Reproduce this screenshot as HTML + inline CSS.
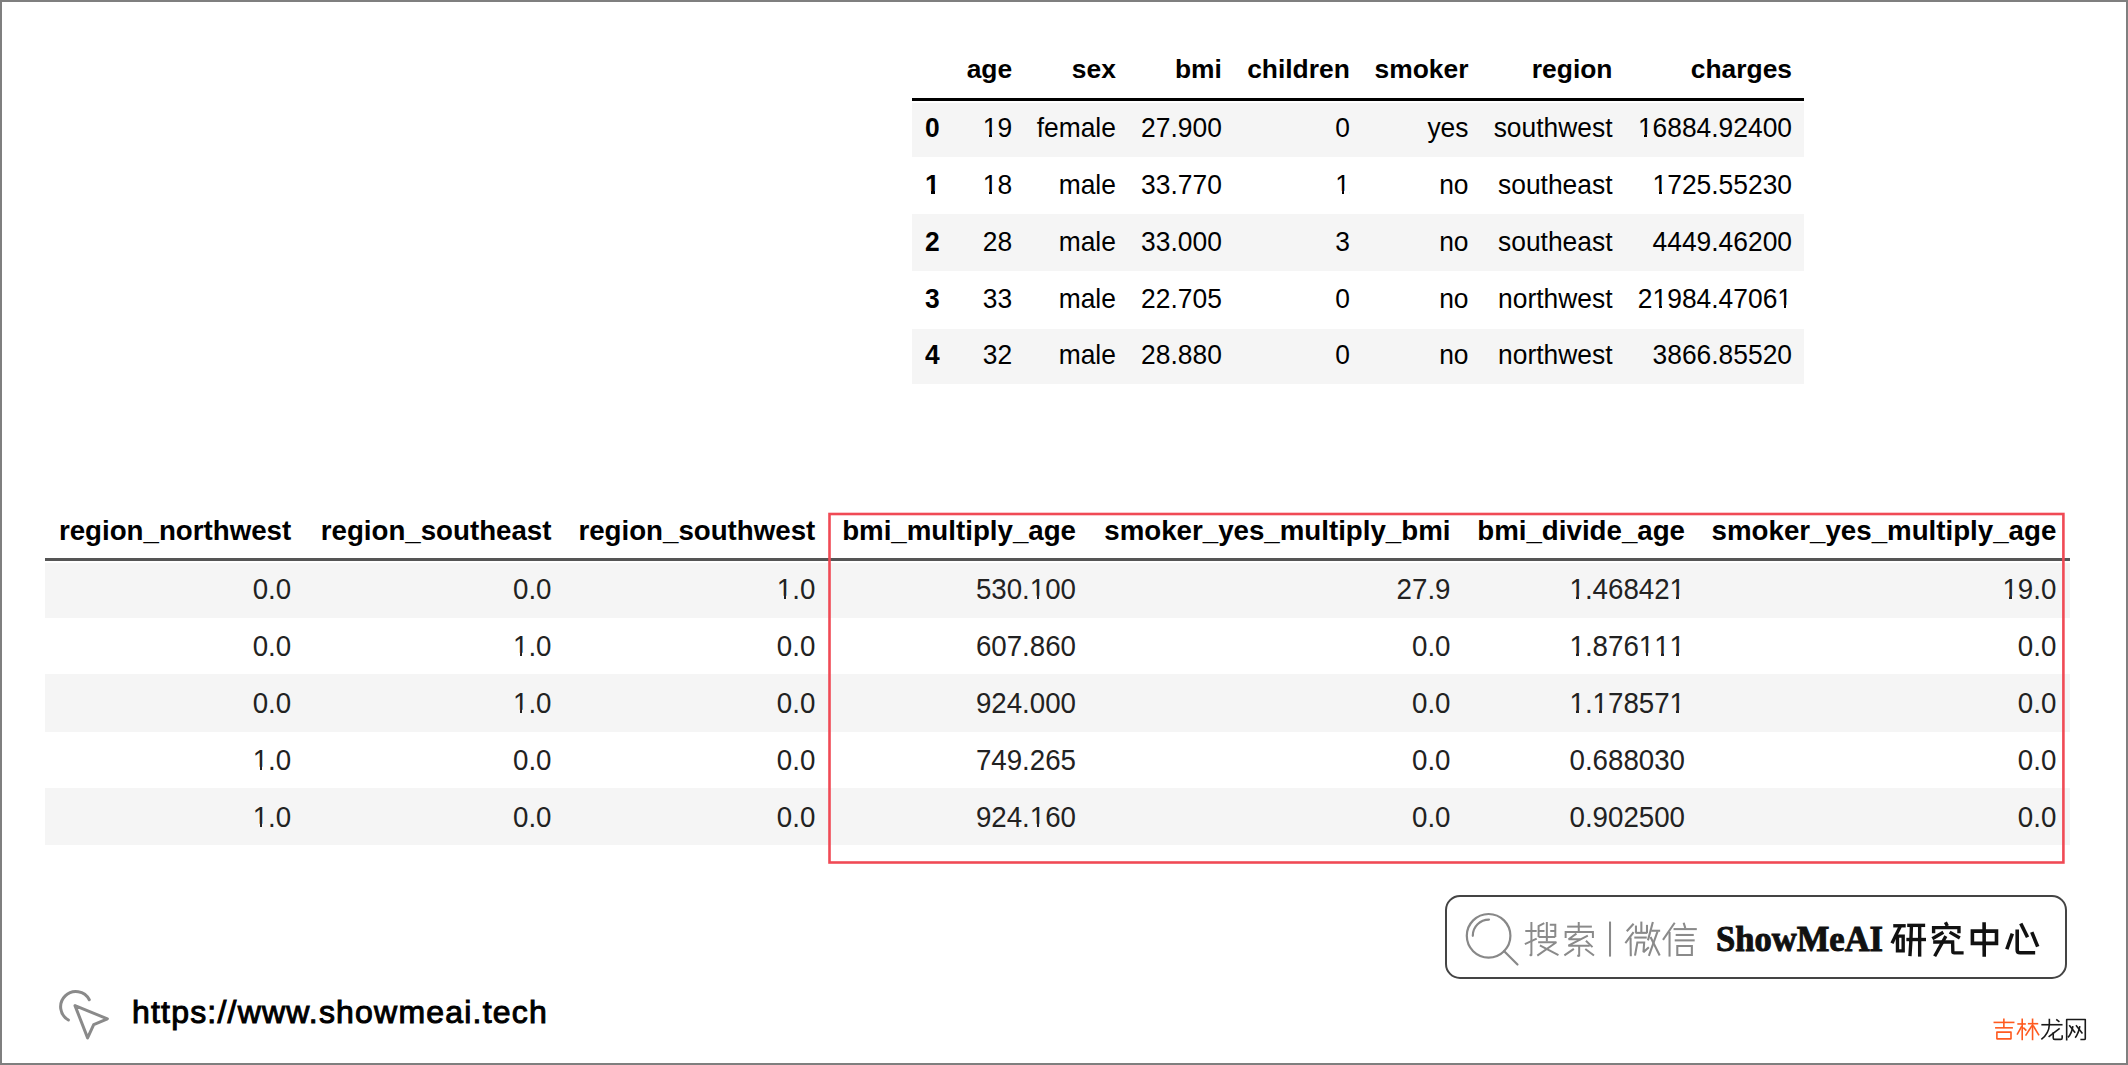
<!DOCTYPE html>
<html><head><meta charset="utf-8"><style>
html,body{margin:0;padding:0;}
body{width:2128px;height:1065px;position:relative;overflow:hidden;background:#fff;font-family:"Liberation Sans", sans-serif;}
.frame{position:absolute;left:0;top:0;width:2124px;height:1061px;border:2px solid #7f7f7f;}
.r{position:absolute;box-sizing:content-box;}
.t{position:absolute;line-height:0;white-space:nowrap;}
.a1,.b1{position:relative;}
.a1::before,.a1::after,.b1::before,.b1::after{content:'';position:absolute;background:var(--bg);}
.a1::before{left:0.03em;width:0.219em;bottom:0.175em;height:0.15em;}
.a1::after{left:0.342em;width:0.2em;bottom:0.175em;height:0.15em;}
.b1::before{left:0.03em;width:0.2em;bottom:0.175em;height:0.175em;}
.b1::after{left:0.374em;width:0.18em;bottom:0.175em;height:0.175em;}
</style></head><body>
<div class="frame"></div>
<div class="r" style="left:911.5px;top:98px;width:892.5px;height:3px;background:#000"></div>
<div class="r" style="left:911.5px;top:103px;width:892.5px;height:53.50px;background:#f5f5f5"></div>
<div class="r" style="left:911.5px;top:213.8px;width:892.5px;height:57.20px;background:#f5f5f5"></div>
<div class="r" style="left:911.5px;top:328.5px;width:892.5px;height:55.50px;background:#f5f5f5"></div>
<div class="t" style="top:69.45px;font-size:26.4px;right:1115.90px;text-align:right;font-weight:bold;">age</div>
<div class="t" style="top:69.45px;font-size:26.4px;right:1012.10px;text-align:right;font-weight:bold;">sex</div>
<div class="t" style="top:69.45px;font-size:26.4px;right:906.20px;text-align:right;font-weight:bold;">bmi</div>
<div class="t" style="top:69.45px;font-size:26.4px;right:778.20px;text-align:right;font-weight:bold;">children</div>
<div class="t" style="top:69.45px;font-size:26.4px;right:659.50px;text-align:right;font-weight:bold;">smoker</div>
<div class="t" style="top:69.45px;font-size:26.4px;right:515.50px;text-align:right;font-weight:bold;">region</div>
<div class="t" style="top:69.45px;font-size:26.4px;right:336.00px;text-align:right;font-weight:bold;">charges</div>
<div class="t" style="top:128.25px;font-size:26.4px;--bg:#f5f5f5;transform:scale(1,1.05);transform-origin:0 9.15px;left:925.00px;font-weight:bold;">0</div>
<div class="t" style="top:128.25px;font-size:26.4px;--bg:#f5f5f5;transform:scale(1,1.05);transform-origin:100% 9.15px;right:1115.90px;text-align:right;"><span class="a1">1</span>9</div>
<div class="t" style="top:128.25px;font-size:26.4px;--bg:#f5f5f5;transform:scale(1,1.05);transform-origin:100% 9.15px;right:1012.10px;text-align:right;">female</div>
<div class="t" style="top:128.25px;font-size:26.4px;--bg:#f5f5f5;transform:scale(1,1.05);transform-origin:100% 9.15px;right:906.20px;text-align:right;">27.900</div>
<div class="t" style="top:128.25px;font-size:26.4px;--bg:#f5f5f5;transform:scale(1,1.05);transform-origin:100% 9.15px;right:778.20px;text-align:right;">0</div>
<div class="t" style="top:128.25px;font-size:26.4px;--bg:#f5f5f5;transform:scale(1,1.05);transform-origin:100% 9.15px;right:659.50px;text-align:right;">yes</div>
<div class="t" style="top:128.25px;font-size:26.4px;--bg:#f5f5f5;transform:scale(1,1.05);transform-origin:100% 9.15px;right:515.50px;text-align:right;">southwest</div>
<div class="t" style="top:128.25px;font-size:26.4px;--bg:#f5f5f5;transform:scale(1,1.05);transform-origin:100% 9.15px;right:336.00px;text-align:right;"><span class="a1">1</span>6884.92400</div>
<div class="t" style="top:185.05px;font-size:26.4px;--bg:#fff;transform:scale(1,1.05);transform-origin:0 9.15px;left:925.00px;font-weight:bold;"><span class="b1">1</span></div>
<div class="t" style="top:185.05px;font-size:26.4px;--bg:#fff;transform:scale(1,1.05);transform-origin:100% 9.15px;right:1115.90px;text-align:right;"><span class="a1">1</span>8</div>
<div class="t" style="top:185.05px;font-size:26.4px;--bg:#fff;transform:scale(1,1.05);transform-origin:100% 9.15px;right:1012.10px;text-align:right;">male</div>
<div class="t" style="top:185.05px;font-size:26.4px;--bg:#fff;transform:scale(1,1.05);transform-origin:100% 9.15px;right:906.20px;text-align:right;">33.770</div>
<div class="t" style="top:185.05px;font-size:26.4px;--bg:#fff;transform:scale(1,1.05);transform-origin:100% 9.15px;right:778.20px;text-align:right;"><span class="a1">1</span></div>
<div class="t" style="top:185.05px;font-size:26.4px;--bg:#fff;transform:scale(1,1.05);transform-origin:100% 9.15px;right:659.50px;text-align:right;">no</div>
<div class="t" style="top:185.05px;font-size:26.4px;--bg:#fff;transform:scale(1,1.05);transform-origin:100% 9.15px;right:515.50px;text-align:right;">southeast</div>
<div class="t" style="top:185.05px;font-size:26.4px;--bg:#fff;transform:scale(1,1.05);transform-origin:100% 9.15px;right:336.00px;text-align:right;"><span class="a1">1</span>725.55230</div>
<div class="t" style="top:241.85px;font-size:26.4px;--bg:#f5f5f5;transform:scale(1,1.05);transform-origin:0 9.15px;left:925.00px;font-weight:bold;">2</div>
<div class="t" style="top:241.85px;font-size:26.4px;--bg:#f5f5f5;transform:scale(1,1.05);transform-origin:100% 9.15px;right:1115.90px;text-align:right;">28</div>
<div class="t" style="top:241.85px;font-size:26.4px;--bg:#f5f5f5;transform:scale(1,1.05);transform-origin:100% 9.15px;right:1012.10px;text-align:right;">male</div>
<div class="t" style="top:241.85px;font-size:26.4px;--bg:#f5f5f5;transform:scale(1,1.05);transform-origin:100% 9.15px;right:906.20px;text-align:right;">33.000</div>
<div class="t" style="top:241.85px;font-size:26.4px;--bg:#f5f5f5;transform:scale(1,1.05);transform-origin:100% 9.15px;right:778.20px;text-align:right;">3</div>
<div class="t" style="top:241.85px;font-size:26.4px;--bg:#f5f5f5;transform:scale(1,1.05);transform-origin:100% 9.15px;right:659.50px;text-align:right;">no</div>
<div class="t" style="top:241.85px;font-size:26.4px;--bg:#f5f5f5;transform:scale(1,1.05);transform-origin:100% 9.15px;right:515.50px;text-align:right;">southeast</div>
<div class="t" style="top:241.85px;font-size:26.4px;--bg:#f5f5f5;transform:scale(1,1.05);transform-origin:100% 9.15px;right:336.00px;text-align:right;">4449.46200</div>
<div class="t" style="top:298.65px;font-size:26.4px;--bg:#fff;transform:scale(1,1.05);transform-origin:0 9.15px;left:925.00px;font-weight:bold;">3</div>
<div class="t" style="top:298.65px;font-size:26.4px;--bg:#fff;transform:scale(1,1.05);transform-origin:100% 9.15px;right:1115.90px;text-align:right;">33</div>
<div class="t" style="top:298.65px;font-size:26.4px;--bg:#fff;transform:scale(1,1.05);transform-origin:100% 9.15px;right:1012.10px;text-align:right;">male</div>
<div class="t" style="top:298.65px;font-size:26.4px;--bg:#fff;transform:scale(1,1.05);transform-origin:100% 9.15px;right:906.20px;text-align:right;">22.705</div>
<div class="t" style="top:298.65px;font-size:26.4px;--bg:#fff;transform:scale(1,1.05);transform-origin:100% 9.15px;right:778.20px;text-align:right;">0</div>
<div class="t" style="top:298.65px;font-size:26.4px;--bg:#fff;transform:scale(1,1.05);transform-origin:100% 9.15px;right:659.50px;text-align:right;">no</div>
<div class="t" style="top:298.65px;font-size:26.4px;--bg:#fff;transform:scale(1,1.05);transform-origin:100% 9.15px;right:515.50px;text-align:right;">northwest</div>
<div class="t" style="top:298.65px;font-size:26.4px;--bg:#fff;transform:scale(1,1.05);transform-origin:100% 9.15px;right:336.00px;text-align:right;">2<span class="a1">1</span>984.4706<span class="a1">1</span></div>
<div class="t" style="top:355.45px;font-size:26.4px;--bg:#f5f5f5;transform:scale(1,1.05);transform-origin:0 9.15px;left:925.00px;font-weight:bold;">4</div>
<div class="t" style="top:355.45px;font-size:26.4px;--bg:#f5f5f5;transform:scale(1,1.05);transform-origin:100% 9.15px;right:1115.90px;text-align:right;">32</div>
<div class="t" style="top:355.45px;font-size:26.4px;--bg:#f5f5f5;transform:scale(1,1.05);transform-origin:100% 9.15px;right:1012.10px;text-align:right;">male</div>
<div class="t" style="top:355.45px;font-size:26.4px;--bg:#f5f5f5;transform:scale(1,1.05);transform-origin:100% 9.15px;right:906.20px;text-align:right;">28.880</div>
<div class="t" style="top:355.45px;font-size:26.4px;--bg:#f5f5f5;transform:scale(1,1.05);transform-origin:100% 9.15px;right:778.20px;text-align:right;">0</div>
<div class="t" style="top:355.45px;font-size:26.4px;--bg:#f5f5f5;transform:scale(1,1.05);transform-origin:100% 9.15px;right:659.50px;text-align:right;">no</div>
<div class="t" style="top:355.45px;font-size:26.4px;--bg:#f5f5f5;transform:scale(1,1.05);transform-origin:100% 9.15px;right:515.50px;text-align:right;">northwest</div>
<div class="t" style="top:355.45px;font-size:26.4px;--bg:#f5f5f5;transform:scale(1,1.05);transform-origin:100% 9.15px;right:336.00px;text-align:right;">3866.85520</div>
<div class="r" style="left:45px;top:558.3px;width:2025px;height:2.5px;background:#555"></div>
<div class="r" style="left:45px;top:563.3px;width:2025px;height:54.30px;background:#f5f5f5"></div>
<div class="r" style="left:45px;top:674px;width:2025px;height:57.60px;background:#f5f5f5"></div>
<div class="r" style="left:45px;top:788.1px;width:2025px;height:56.80px;background:#f5f5f5"></div>
<div class="t" style="top:530.60px;font-size:27.7px;right:1836.80px;text-align:right;font-weight:bold;">region_northwest</div>
<div class="t" style="top:530.60px;font-size:27.7px;right:1576.50px;text-align:right;font-weight:bold;">region_southeast</div>
<div class="t" style="top:530.60px;font-size:27.7px;right:1312.70px;text-align:right;font-weight:bold;">region_southwest</div>
<div class="t" style="top:530.60px;font-size:27.7px;right:1052.00px;text-align:right;font-weight:bold;">bmi_multiply_age</div>
<div class="t" style="top:530.60px;font-size:27.7px;right:677.50px;text-align:right;font-weight:bold;">smoker_yes_multiply_bmi</div>
<div class="t" style="top:530.60px;font-size:27.7px;right:443.00px;text-align:right;font-weight:bold;">bmi_divide_age</div>
<div class="t" style="top:530.60px;font-size:27.7px;right:71.70px;text-align:right;font-weight:bold;">smoker_yes_multiply_age</div>
<div class="t" style="top:590.40px;font-size:27.7px;--bg:#f5f5f5;transform:scale(1,1.06);transform-origin:100% 9.60px;right:1836.80px;text-align:right;color:#222;">0.0</div>
<div class="t" style="top:590.40px;font-size:27.7px;--bg:#f5f5f5;transform:scale(1,1.06);transform-origin:100% 9.60px;right:1576.50px;text-align:right;color:#222;">0.0</div>
<div class="t" style="top:590.40px;font-size:27.7px;--bg:#f5f5f5;transform:scale(1,1.06);transform-origin:100% 9.60px;right:1312.70px;text-align:right;color:#222;"><span class="a1">1</span>.0</div>
<div class="t" style="top:590.40px;font-size:27.7px;--bg:#f5f5f5;transform:scale(1,1.06);transform-origin:100% 9.60px;right:1052.00px;text-align:right;color:#222;">530.<span class="a1">1</span>00</div>
<div class="t" style="top:590.40px;font-size:27.7px;--bg:#f5f5f5;transform:scale(1,1.06);transform-origin:100% 9.60px;right:677.50px;text-align:right;color:#222;">27.9</div>
<div class="t" style="top:590.40px;font-size:27.7px;--bg:#f5f5f5;transform:scale(1,1.06);transform-origin:100% 9.60px;right:443.00px;text-align:right;color:#222;"><span class="a1">1</span>.46842<span class="a1">1</span></div>
<div class="t" style="top:590.40px;font-size:27.7px;--bg:#f5f5f5;transform:scale(1,1.06);transform-origin:100% 9.60px;right:71.70px;text-align:right;color:#222;"><span class="a1">1</span>9.0</div>
<div class="t" style="top:647.20px;font-size:27.7px;--bg:#fff;transform:scale(1,1.06);transform-origin:100% 9.60px;right:1836.80px;text-align:right;color:#222;">0.0</div>
<div class="t" style="top:647.20px;font-size:27.7px;--bg:#fff;transform:scale(1,1.06);transform-origin:100% 9.60px;right:1576.50px;text-align:right;color:#222;"><span class="a1">1</span>.0</div>
<div class="t" style="top:647.20px;font-size:27.7px;--bg:#fff;transform:scale(1,1.06);transform-origin:100% 9.60px;right:1312.70px;text-align:right;color:#222;">0.0</div>
<div class="t" style="top:647.20px;font-size:27.7px;--bg:#fff;transform:scale(1,1.06);transform-origin:100% 9.60px;right:1052.00px;text-align:right;color:#222;">607.860</div>
<div class="t" style="top:647.20px;font-size:27.7px;--bg:#fff;transform:scale(1,1.06);transform-origin:100% 9.60px;right:677.50px;text-align:right;color:#222;">0.0</div>
<div class="t" style="top:647.20px;font-size:27.7px;--bg:#fff;transform:scale(1,1.06);transform-origin:100% 9.60px;right:443.00px;text-align:right;color:#222;"><span class="a1">1</span>.876<span class="a1">1</span><span class="a1">1</span><span class="a1">1</span></div>
<div class="t" style="top:647.20px;font-size:27.7px;--bg:#fff;transform:scale(1,1.06);transform-origin:100% 9.60px;right:71.70px;text-align:right;color:#222;">0.0</div>
<div class="t" style="top:704.00px;font-size:27.7px;--bg:#f5f5f5;transform:scale(1,1.06);transform-origin:100% 9.60px;right:1836.80px;text-align:right;color:#222;">0.0</div>
<div class="t" style="top:704.00px;font-size:27.7px;--bg:#f5f5f5;transform:scale(1,1.06);transform-origin:100% 9.60px;right:1576.50px;text-align:right;color:#222;"><span class="a1">1</span>.0</div>
<div class="t" style="top:704.00px;font-size:27.7px;--bg:#f5f5f5;transform:scale(1,1.06);transform-origin:100% 9.60px;right:1312.70px;text-align:right;color:#222;">0.0</div>
<div class="t" style="top:704.00px;font-size:27.7px;--bg:#f5f5f5;transform:scale(1,1.06);transform-origin:100% 9.60px;right:1052.00px;text-align:right;color:#222;">924.000</div>
<div class="t" style="top:704.00px;font-size:27.7px;--bg:#f5f5f5;transform:scale(1,1.06);transform-origin:100% 9.60px;right:677.50px;text-align:right;color:#222;">0.0</div>
<div class="t" style="top:704.00px;font-size:27.7px;--bg:#f5f5f5;transform:scale(1,1.06);transform-origin:100% 9.60px;right:443.00px;text-align:right;color:#222;"><span class="a1">1</span>.<span class="a1">1</span>7857<span class="a1">1</span></div>
<div class="t" style="top:704.00px;font-size:27.7px;--bg:#f5f5f5;transform:scale(1,1.06);transform-origin:100% 9.60px;right:71.70px;text-align:right;color:#222;">0.0</div>
<div class="t" style="top:760.80px;font-size:27.7px;--bg:#fff;transform:scale(1,1.06);transform-origin:100% 9.60px;right:1836.80px;text-align:right;color:#222;"><span class="a1">1</span>.0</div>
<div class="t" style="top:760.80px;font-size:27.7px;--bg:#fff;transform:scale(1,1.06);transform-origin:100% 9.60px;right:1576.50px;text-align:right;color:#222;">0.0</div>
<div class="t" style="top:760.80px;font-size:27.7px;--bg:#fff;transform:scale(1,1.06);transform-origin:100% 9.60px;right:1312.70px;text-align:right;color:#222;">0.0</div>
<div class="t" style="top:760.80px;font-size:27.7px;--bg:#fff;transform:scale(1,1.06);transform-origin:100% 9.60px;right:1052.00px;text-align:right;color:#222;">749.265</div>
<div class="t" style="top:760.80px;font-size:27.7px;--bg:#fff;transform:scale(1,1.06);transform-origin:100% 9.60px;right:677.50px;text-align:right;color:#222;">0.0</div>
<div class="t" style="top:760.80px;font-size:27.7px;--bg:#fff;transform:scale(1,1.06);transform-origin:100% 9.60px;right:443.00px;text-align:right;color:#222;">0.688030</div>
<div class="t" style="top:760.80px;font-size:27.7px;--bg:#fff;transform:scale(1,1.06);transform-origin:100% 9.60px;right:71.70px;text-align:right;color:#222;">0.0</div>
<div class="t" style="top:817.60px;font-size:27.7px;--bg:#f5f5f5;transform:scale(1,1.06);transform-origin:100% 9.60px;right:1836.80px;text-align:right;color:#222;"><span class="a1">1</span>.0</div>
<div class="t" style="top:817.60px;font-size:27.7px;--bg:#f5f5f5;transform:scale(1,1.06);transform-origin:100% 9.60px;right:1576.50px;text-align:right;color:#222;">0.0</div>
<div class="t" style="top:817.60px;font-size:27.7px;--bg:#f5f5f5;transform:scale(1,1.06);transform-origin:100% 9.60px;right:1312.70px;text-align:right;color:#222;">0.0</div>
<div class="t" style="top:817.60px;font-size:27.7px;--bg:#f5f5f5;transform:scale(1,1.06);transform-origin:100% 9.60px;right:1052.00px;text-align:right;color:#222;">924.<span class="a1">1</span>60</div>
<div class="t" style="top:817.60px;font-size:27.7px;--bg:#f5f5f5;transform:scale(1,1.06);transform-origin:100% 9.60px;right:677.50px;text-align:right;color:#222;">0.0</div>
<div class="t" style="top:817.60px;font-size:27.7px;--bg:#f5f5f5;transform:scale(1,1.06);transform-origin:100% 9.60px;right:443.00px;text-align:right;color:#222;">0.902500</div>
<div class="t" style="top:817.60px;font-size:27.7px;--bg:#f5f5f5;transform:scale(1,1.06);transform-origin:100% 9.60px;right:71.70px;text-align:right;color:#222;">0.0</div>
<svg class="r" style="left:0;top:0" width="2128" height="1065"><rect x="829.5" y="514" width="1233.9" height="348.5" fill="none" stroke="#f04a55" stroke-width="2.6"/></svg>
<div class="r" style="left:1445px;top:895px;width:618px;height:80px;border:2px solid #444;border-radius:15px"></div>
<svg class="r" style="left:0;top:0" width="2128" height="1065" viewBox="0 0 2128 1065">
<g fill="none" stroke="#888" stroke-width="2.2" stroke-linecap="round">
<circle cx="1488.6" cy="935.8" r="21.8"/>
<path d="M1472.8 935.8 A16.2 16.2 0 0 1 1489 919.6"/>
<path d="M1504 951 L1517.5 964.5"/>
</g>
<g fill="none" stroke="#8a8a8a" stroke-width="3" stroke-linecap="round" stroke-linejoin="round">
<path d="M89.3 999.7 A15.2 15.2 0 1 0 68.4 1020"/>
<path d="M75 1005.6 L107.4 1018.8 L93.7 1024.6 L87.6 1037.9 Z"/>
</g>
</svg>
<div class="t" style="top:939.03px;font-size:36px;transform:scale(0.96,1);transform-origin:0 12.47px;left:1716.00px;font-weight:bold;color:#111;font-family:'Liberation Serif', serif;-webkit-text-stroke:1px #111;">ShowMeAI</div>
<div class="t" style="top:1012.01px;font-size:32px;left:132.00px;letter-spacing:1.2px;-webkit-text-stroke:1px #000;">https://www.showmeai.tech</div>
<svg class="r" style="left:0;top:0" width="2128" height="1065" viewBox="0 0 2128 1065">
<g transform="translate(1520 915) scale(0.042265)" fill="none" stroke="#8a8a8a" stroke-width="47" stroke-linecap="butt" stroke-linejoin="miter" stroke-miterlimit="1.5">
<path d="M125 378 L395 378"/>
<path d="M270 165 L270 960 L228 935"/>
<path d="M115 690 L395 560"/>
<path d="M575 195 L440 265 L440 520"/>
<path d="M440 378 L580 378"/>
<path d="M705 230 L835 230 L835 520"/>
<path d="M715 378 L835 378"/>
<path d="M440 520 L835 520"/>
<path d="M635 165 L635 625"/>
<path d="M430 645 L860 645 L410 960"/>
<path d="M470 720 L910 950"/>
<path d="M1115 275 L1700 275"/>
<path d="M1390 165 L1390 395"/>
<path d="M1080 545 L1080 400 L1725 400 L1725 545"/>
<path d="M1335 440 L1150 575 L1430 575"/>
<path d="M1605 490 L1145 725 L1650 725"/>
<path d="M1560 610 L1715 760"/>
<path d="M1400 725 L1400 975 L1355 955"/>
<path d="M1275 800 L1050 955"/>
<path d="M1545 805 L1750 960"/>
</g>
<g transform="translate(1600 915) scale(0.046992)" fill="none" stroke="#8a8a8a" stroke-width="44" stroke-linecap="butt" stroke-linejoin="miter" stroke-miterlimit="1.5">
<path d="M213 140 L213 885"/>
<path d="M715 185 L570 345"/>
<path d="M715 365 L540 600"/>
<path d="M650 480 L655 880"/>
<path d="M765 225 L765 380"/>
<path d="M880 140 L880 370"/>
<path d="M1000 210 L1000 385"/>
<path d="M755 380 L1005 380"/>
<path d="M730 480 L995 480"/>
<path d="M745 865 L795 585 L940 585 L925 790 L1040 685"/>
<path d="M1125 150 L1020 540"/>
<path d="M1090 335 L1280 335"/>
<path d="M1225 350 L1040 870"/>
<path d="M1075 470 L1270 860"/>
<path d="M1590 165 L1340 530"/>
<path d="M1480 360 L1480 885"/>
<path d="M1780 165 L1815 280"/>
<path d="M1565 300 L2060 300"/>
<path d="M1610 425 L1995 425"/>
<path d="M1590 540 L2015 540"/>
<path d="M1645 660 L1955 660 L1955 850 L1645 850 Z"/>
</g>
<g transform="translate(1885 915) scale(0.042265)" fill="none" stroke="#111" stroke-width="80" stroke-linecap="butt" stroke-linejoin="miter">
<path d="M195 255 L490 255"/>
<path d="M360 275 L165 670"/>
<path d="M295 500 L430 500 L430 850 L295 850 Z"/>
<path d="M525 245 L950 245"/>
<path d="M505 580 L970 580"/>
<path d="M625 265 L612 620 L590 975"/>
<path d="M820 265 L820 985"/>
<path d="M1430 170 L1475 262"/>
<path d="M1150 430 L1150 300 L1750 300 L1750 430"/>
<path d="M1380 410 L1120 560"/>
<path d="M1530 405 L1770 545"/>
<path d="M1140 640 L1600 640 L1605 870 Q1605 895 1640 895 L1860 895"/>
<path d="M1440 500 L1175 975"/>
</g>
<g transform="translate(1965 915) scale(0.042265)" fill="none" stroke="#111" stroke-width="85" stroke-linecap="butt" stroke-linejoin="miter">
<path d="M175 382 L745 382 L745 672 L175 672 Z"/>
<path d="M452 170 L455 990"/>
<path d="M1120 440 L990 810"/>
<path d="M1235 345 L1235 830 Q1235 895 1300 895 L1660 895"/>
<path d="M1320 200 L1480 525"/>
<path d="M1580 405 L1720 750"/>
</g>
<g transform="translate(1985 1010) scale(0.051692)" fill="none" stroke-width="31" stroke-linecap="butt" stroke-linejoin="round">
<g stroke="#ff5a1f">
<path d="M165 240 L570 240"/>
<path d="M365 165 L365 345"/>
<path d="M195 345 L540 345"/>
<path d="M230 428 L503 428 L503 558 L230 558 Z"/>
<path d="M625 270 L790 270"/>
<path d="M720 165 L720 585"/>
<path d="M712 310 L620 475"/>
<path d="M740 340 L800 400"/>
<path d="M830 265 L1030 265"/>
<path d="M920 165 L920 585"/>
<path d="M910 300 L785 495"/>
<path d="M930 300 L1045 490"/>
</g>
<g stroke="#1a1a1a">
<path d="M1090 285 L1500 285"/>
<path d="M1245 170 L1245 280 Q1240 450 1090 570"/>
<path d="M1445 355 L1230 520"/>
<path d="M1320 430 L1320 540 Q1320 568 1350 568 L1465 568 Q1493 568 1493 540 L1493 490"/>
<path d="M1378 180 L1440 228"/>
<path d="M1580 590 L1580 185 L1940 185 L1940 550 Q1940 570 1920 570 L1845 570"/>
<path d="M1630 295 L1745 440"/>
<path d="M1700 310 Q1680 450 1605 530"/>
<path d="M1760 295 L1885 455"/>
<path d="M1835 310 Q1810 450 1745 535"/>
</g>
</g>
</svg>
</body></html>
